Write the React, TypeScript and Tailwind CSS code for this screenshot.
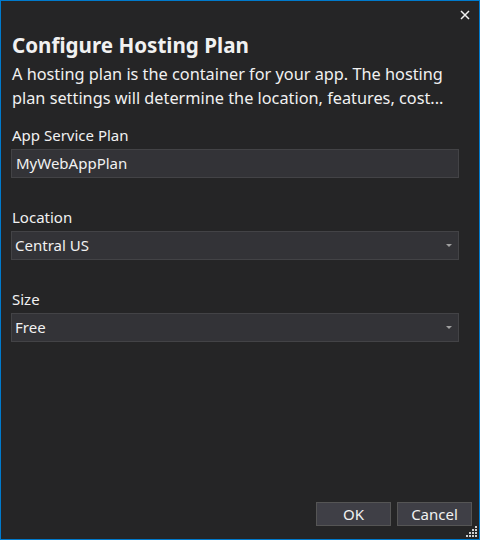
import { ReactNode } from "react";

const font = { fontFamily: '"Noto Sans", "Open Sans", sans-serif' };

function Field({ label, children }: { label: string; children: ReactNode }) {
  return (
    <div className="flex flex-col">
      <label className="text-[15px] leading-[20px] text-[#f1f1f1] pl-[1px]">{label}</label>
      <div className="mt-[4px]">{children}</div>
    </div>
  );
}

function Select({ value }: { value: string }) {
  return (
    <div className="flex items-center justify-between h-[29px] bg-[#333337] border border-[#434346] pl-[3px] pr-[6px] text-[15px] text-[#f1f1f1]">
      <span>{value}</span>
      <svg width="6" height="4" viewBox="0 0 6 4">
        <path d="M0 0h6L3 3z" fill="#a0a0a0" />
      </svg>
    </div>
  );
}

function Grip() {
  const dots: [number, number][] = [];
  for (let r = 0; r < 4; r++) {
    for (let c = 3 - r; c < 4; c++) dots.push([c * 3, r * 3]);
  }
  return (
    <svg width="11" height="11" viewBox="0 0 11 11" className="absolute right-[2px] bottom-[2px]">
      {dots.map(([x, y]) => (
        <rect key={`${x}-${y}`} x={x} y={y} width="2" height="2" fill="#d0d0d0" />
      ))}
    </svg>
  );
}

export default function App() {
  return (
    <div
      style={font}
      className="relative w-[480px] h-[540px] bg-[#252526] border border-[#007acc] flex flex-col text-[#f1f1f1] overflow-hidden"
    >
      {/* Close */}
      <div className="flex justify-end h-[30px] pr-[9px] pt-[9px]">
        <svg width="10" height="10" viewBox="0 0 10 10">
          <path d="M1 1l8 8M9 1L1 9" stroke="#f1f1f1" strokeWidth="1.5" />
        </svg>
      </div>

      <div className="flex flex-col px-[10px] flex-1">
        <h1 className="text-[20.6px] leading-[28px] font-bold pl-[1px]">Configure Hosting Plan</h1>
        <p className="text-[16.3px] leading-[24px] pl-[1px] mt-[3px]">
          A hosting plan is the container for your app. The hosting plan settings will determine the location, features, cost...
        </p>

        <div className="flex flex-col gap-[29px] mt-[15px] pr-[10px]">
          <Field label="App Service Plan">
            <div className="flex items-center h-[29px] bg-[#333337] border border-[#434346] pl-[4px] text-[15px]">
              MyWebAppPlan
            </div>
          </Field>
          <Field label="Location">
            <Select value="Central US" />
          </Field>
          <Field label="Size">
            <Select value="Free" />
          </Field>
        </div>

        <div className="flex-1" />

        <div className="flex justify-end gap-[6px] -mr-[3px] mb-[13px]">
          <button className="w-[75px] h-[24px] bg-[#3f3f46] border border-[#555555] text-[15px] leading-none text-[#f1f1f1]">
            OK
          </button>
          <button className="w-[75px] h-[24px] bg-[#3f3f46] border border-[#555555] text-[15px] leading-none text-[#f1f1f1]">
            Cancel
          </button>
        </div>
      </div>
      <Grip />
    </div>
  );
}
